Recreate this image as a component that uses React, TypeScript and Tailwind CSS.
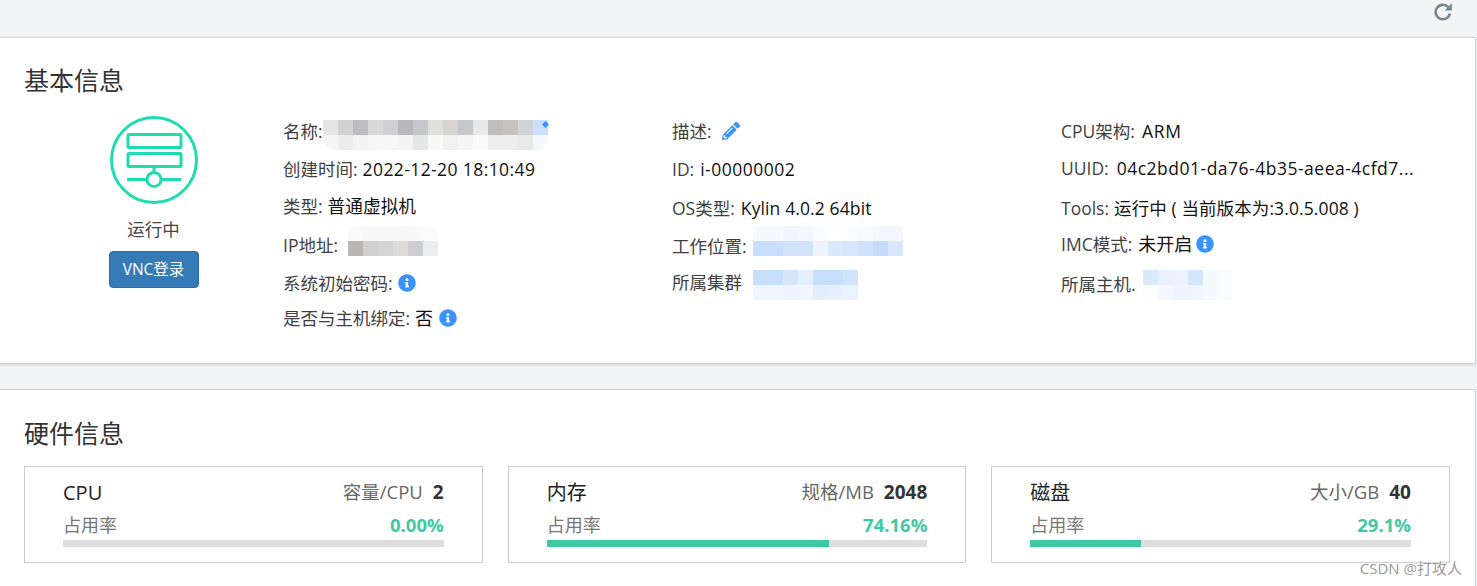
import React from "react";
import { FaInfoCircle, FaPencilAlt } from "react-icons/fa";

const FONT = "font-['Open_Sans','Noto_Sans_CJK_SC',sans-serif]";

function Info() {
  return <FaInfoCircle className="inline-block text-[#3a93fb] w-[18px] h-[18px] align-[-3px]" />;
}

function Mosaic({ className, rows }: { className: string; rows: string[][] }) {
  return (
    <div className={`absolute flex flex-col ${className}`}>
      {rows.map((r, i) => (
        <div key={i} className="flex h-[15px]">
          {r.map((c, j) => (
            <div key={j} className="w-[15px] h-full" style={{ backgroundColor: c }} />
          ))}
        </div>
      ))}
    </div>
  );
}

function Row({ label, value, extra, valueClass, children }: { label: string; value?: string; extra?: string; valueClass?: string; children?: React.ReactNode }) {
  return (
    <div className={`relative h-[38px] flex items-center whitespace-nowrap text-[17.5px] ${extra ?? ""}`}>
      <span className="text-[#3f3f3f]">{label}</span>
      {value && <span className={`text-[#111] ${valueClass ?? "ml-[5px]"}`}>{value}</span>}
      {children}
    </div>
  );
}

function HwCard({ title, specLabel, spec, pct, width }: { title: string; specLabel: string; spec: string; pct: string; width: number }) {
  return (
    <div className="h-[97px] border border-[#ccc] px-[38px] pt-[10px]">
      <div className="flex items-center justify-between h-[30px]">
        <span className="text-[20px] text-[#222] mt-[1px]">{title}</span>
        <span className="flex items-center">
          <span className="text-[18.5px] text-[#666]">{specLabel}</span>
          <span className="ml-[10px] text-[19px] font-bold text-[#333]">{spec}</span>
        </span>
      </div>
      <div className="flex items-center justify-between h-[30px] mt-[3px]">
        <span className="text-[18px] text-[#777]">占用率</span>
        <span className="text-[18.5px] font-bold text-[#3ec9a5]">{pct}</span>
      </div>
      <div className="h-[7px] bg-[#dedede]">
        <div className="h-full bg-[#3ec9a5]" style={{ width: `${width}%` }} />
      </div>
    </div>
  );
}

export default function App() {
  return (
    <div className={`relative h-[586px] overflow-hidden bg-[#f3f4f6] ${FONT}`}>
      <div className="h-[37px] flex justify-end pr-[24px] pt-[2px]">
        <svg width="20" height="19" viewBox="0 0 20 19" fill="none">
          <path d="M15.2 5.2A7.2 7.2 0 1 0 16.9 11.5" stroke="#78838f" strokeWidth="2.6" />
          <path d="M18.8 1.2V8.4H11.6Z" fill="#78838f" />
        </svg>
      </div>

      <section className="h-[327px] mr-px bg-white border-t border-r border-b border-[#d6d6d6] shadow-[0_1px_3px_rgba(0,0,0,0.15)] px-[24px] pt-[25px]">
        <h2 className="text-[25px] leading-[34px] text-[#333]">基本信息</h2>
        <div className="flex mt-[15px]">
          <div className="w-[259px] flex flex-col items-center pt-[4px]">
            <svg width="88" height="88" viewBox="0 0 88 88" fill="none" stroke="#1fdcb0" strokeWidth="3">
              <circle cx="44" cy="44" r="42.5" />
              <rect x="18" y="18.5" width="53" height="13" rx="1" />
              <rect x="18" y="37.5" width="53" height="13" rx="1" />
              <path d="M44 50.5V56M17 63.5H37M51 63.5H71" />
              <circle cx="44" cy="63.5" r="7" />
            </svg>
            <div className="mt-[12px] h-[26px] leading-[26px] text-[17.5px] text-[#444]">运行中</div>
            <button className="mt-[9px] w-[90px] h-[37px] rounded-[4px] bg-[#337ab7] border border-[#2e6da4] text-white text-[15.5px]">VNC登录</button>
          </div>

          <div className="w-[389px] flex flex-col">
            <Row label="名称:">
              <Mosaic
                className="left-[40px] top-[8px] rounded-b-[12px] overflow-hidden"
                rows={[
                  ["#e4e4e4", "#d2d2d2", "#bdbcc0", "#d8d8d8", "#cfd1d5", "#bbb8bb", "#c5c7ca", "#dfdfdc", "#d8d3d0", "#c6c9cc", "#e8e8e8", "#bfbebf", "#c5c2c0", "#d2d3d7", "#cce0fb"],
                  ["#f5f5f5", "#ececec", "#f2f2f2", "#f6f6f6", "#f7f7f7", "#f4f4f4", "#e6e7e7", "#f9f9f8", "#f1f1f1", "#f4f5f6", "#fafafa", "#ededed", "#ededed", "#e9e9e9", "#f3f8fe"],
                ]}
              />
              <span className="absolute left-[260px] top-[10px] w-[5px] h-[5px] rotate-45 bg-[#3a93fb]" />
            </Row>
            <Row label="创建时间:" value="2022-12-20 18:10:49" valueClass="ml-[5px] tracking-[0.4px]" />
            <Row label="类型:" value="普通虚拟机" extra="-mt-px" valueClass="ml-[5px] text-[17.7px]" />
            <Row label="IP地址:" extra="mt-px">
              <Mosaic
                className="left-[65px] top-0 rounded-tl-[10px]"
                rows={[
                  ["#fafafa", "#f8f8f8", "#f8f8f8", "#f7f7f7", "#f9f9f9", "#fbfbfb"],
                  ["#b9b7b5", "#cfcfd0", "#d4d4d4", "#dcdbd6", "#cecdd3", "#ecedee"],
                ]}
              />
            </Row>
            <Row label="系统初始密码:">
              <span className="ml-[5px] flex"><Info /></span>
            </Row>
            <Row label="是否与主机绑定:" value="否" extra="-mt-[3px]" valueClass="ml-[5px] text-[18px]">
              <span className="ml-[6px] flex"><Info /></span>
            </Row>
          </div>

          <div className="w-[389px] flex flex-col">
            <Row label="描述:">
              <FaPencilAlt className="ml-[10px] w-[18px] h-[18px] text-[#3a93fb]" />
            </Row>
            <Row label="ID:" value="i-00000002" valueClass="ml-[6px] tracking-[0.5px]" />
            <Row label="OS类型:" value="Kylin 4.0.2 64bit" extra="mt-px" valueClass="ml-[6px] tracking-[0.12px]" />
            <Row label="工作位置:">
              <Mosaic
                className="left-[81px] top-[-1px] rounded-tl-[10px]"
                rows={[
                  ["#f6f9fe", "#f6f9fe", "#f1f6fe", "#f3f7fe", "#fbfcff", "#fefeff", "#fbfcff", "#f8fafe", "#f4f8fe", "#f4f8fe"],
                  ["#c8dffb", "#c8dffb", "#d0e3fb", "#d0e3fb", "#edf4fe", "#dbe9fc", "#d6e6fc", "#cfe2fb", "#c4dcfa", "#d8e7fc"],
                ]}
              />
            </Row>
            <Row label="所属集群" extra="-mt-[2px]">
              <Mosaic
                className="left-[81px] top-[7px] rounded-bl-[10px]"
                rows={[
                  ["#c8dffb", "#c8dffb", "#d5e6fb", "#e4effd", "#c8dffb", "#c8dffb", "#d0e3fb"],
                  ["#f0f6fe", "#f0f6fe", "#eef5fe", "#f1f6fe", "#e3eefd", "#e7f0fd", "#eaf2fd"],
                ]}
              />
            </Row>
          </div>

          <div className="flex-1 flex flex-col">
            <Row label="CPU架构:" value="ARM" valueClass="ml-[7px] tracking-[0.8px]" />
            <Row label="UUID:" value="04c2bd01-da76-4b35-aeea-4cfd7..." extra="-mt-px" valueClass="ml-[8px] tracking-[0.5px]" />
            <Row label="Tools:" value="运行中 ( 当前版本为:3.0.5.008 )" extra="mt-[2px]" valueClass="ml-[5px] tracking-[0.1px]" />
            <Row label="IMC模式:" value="未开启" extra="-mt-[2px]" valueClass="ml-[6px] text-[18px]">
              <span className="ml-[4px] flex"><Info /></span>
            </Row>
            <Row label="所属主机." extra="mt-[2px]">
              <Mosaic
                className="left-[82px] top-[5px] rounded-br-[14px]"
                rows={[
                  ["#dbe9fc", "#e9f1fe", "#eaf2fe", "#d5e5fb", "#f6f9fe", "#fbfcff"],
                  ["#fbfdff", "#f4f8fe", "#eff5fe", "#f1f6fe", "#f6f9fe", "#fbfcff"],
                ]}
              />
            </Row>
          </div>
        </div>
      </section>

      <section className="mt-[25px] h-[300px] mr-px bg-white border-t border-r border-[#d0d0d0] px-[24px] pt-[26px]">
        <h2 className="text-[25px] leading-[34px] text-[#333]">硬件信息</h2>
        <div className="grid grid-cols-3 gap-x-[25px] mt-[16px] w-[1426px]">
          <HwCard title="CPU" specLabel="容量/CPU" spec="2" pct="0.00%" width={0} />
          <HwCard title="内存" specLabel="规格/MB" spec="2048" pct="74.16%" width={74.16} />
          <HwCard title="磁盘" specLabel="大小/GB" spec="40" pct="29.1%" width={29.1} />
        </div>
      </section>

      <div className="absolute right-[15px] bottom-[8px] text-[15px] leading-[20px] text-[#9a9a9a] [text-shadow:0_0_2px_#fff]">CSDN @打攻人</div>
    </div>
  );
}
